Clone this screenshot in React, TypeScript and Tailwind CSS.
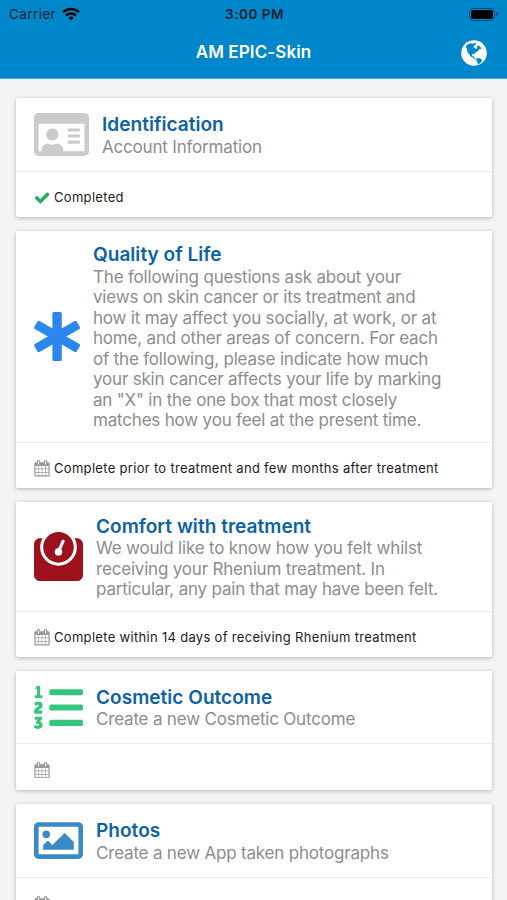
import type { ReactNode } from "react";
import { FaRegIdCard, FaWeight, FaListOl, FaRegImage, FaCheck } from "react-icons/fa";

function Calendar() {
  return (
    <svg viewBox="0 0 1664 1792" className="h-[16.5px] w-4 shrink-0 text-[#999]" fill="currentColor">
      <path d="M128 1664h288v-288H128v288zm352 0h320v-288H480v288zM128 1312h288V992H128v320zm352 0h320V992H480v320zM128 928h288V640H128v288zm736 736h320v-288H864v288zM480 928h320V640H480v288zm768 736h288v-288h-288v288zM864 1312h320V992H864v320zM512 448V160q0-13-9.500-22.500T480 128h-64q-13 0-22.500 9.500T384 160v288q0 13 9.500 22.500T416 480h64q13 0 22.500-9.500T512 448zm736 864h288V992h-288v320zM864 928h320V640H864v288zm384 0h288V640h-288v288zm32-480V160q0-13-9.500-22.500T1248 128h-64q-13 0-22.500 9.500T1152 160v288q0 13 9.500 22.500t22.500 9.500h64q13 0 22.500-9.500T1280 448zm384-64v1280q0 52-38 90t-90 38H128q-52 0-90-38t-38-90V384q0-52 38-90t90-38h128v-96q0-66 47-113T416 0h64q66 0 113 47t47 113v96h384v-96q0-66 47-113t113-47h64q66 0 113 47t47 113v96h128q52 0 90 38t38 90z" />
    </svg>
  );
}

function Asterisk() {
  return (
    <svg viewBox="0 0 46 49" className="h-[49px] w-[46px] shrink-0 overflow-visible text-[#2b87ee]" fill="currentColor">
      <rect x="18.400" y="0" width="9.400" height="49" rx="1.500" />
      <rect x="18.400" y="0" width="9.400" height="49" rx="1.500" transform="rotate(60 23.100 24.500)" />
      <rect x="18.400" y="0" width="9.400" height="49" rx="1.500" transform="rotate(-60 23.100 24.500)" />
    </svg>
  );
}

function Wifi() {
  return (
    <svg viewBox="0 0 18 14" className="h-[14px] w-[18px] text-black" fill="none" stroke="currentColor" strokeWidth="2.500">
      <path d="M1 5.200a11.500 11.500 0 0 1 16 0" />
      <path d="M4 8.500a7.200 7.200 0 0 1 10 0" />
      <path d="M9 13.500 6.300 10.800a4 4 0 0 1 5.400 0z" fill="currentColor" stroke="none" />
    </svg>
  );
}

function Globe() {
  return (
    <svg viewBox="0 0 26 26" className="h-[26px] w-[26px] justify-self-end">
      <circle cx="13" cy="13" r="12.800" fill="#fff" />
      <path
        d="M4.600 6.200 7 4.200l3-1 2 .6 2.500-1 .7 1.400-2 1.300-.8 1.800 1.600.7 1.400 1.200 1-1.700-.6-1.600 1.600-.5 1.800 1.300 1.300 2-2 .3-1.200 1.700-1.800 1.300-1.600.8-.4 1.500-1.500-.6-1.200 1.300.6 1.200 1.500.2.5 1.500 1.700.6-.4.700-2-.7-1.700-1.500-1.800-.8-1.200-2.400-1.700-2.100-.2-2.700-.9-1.300z"
        fill="#0087cb"
      />
      <path d="m15.500 18.600 2-.6 1.900.8 1.800 1.300-.7 1.700-1.400 1.100-1.600 1.400-1 .2.200-2-1.500-1.700z" fill="#0087cb" />
    </svg>
  );
}

type CardProps = {
  icon: ReactNode;
  title: string;
  lines: string[];
  height: string;
  body: string;
  status?: string;
  done?: boolean;
};

function Card({ icon, title, lines, height, body, status, done }: CardProps) {
  return (
    <section className={`flex shrink-0 flex-col rounded-[2px] bg-white shadow-[0_1px_4px_rgba(0,0,0,0.26)] ${height}`}>
      <div className={`flex shrink-0 items-center gap-[13px] border-b border-[#ececec] pl-[18px] ${body}`}>
        {icon}
        <div className="pt-px whitespace-nowrap">
          <h2 className="text-[19px] leading-[23.5px] font-semibold tracking-[0.04px] text-[#0c62a3]">{title}</h2>
          {lines.map((line) => (
            <p key={line} className="text-[17px] leading-[20.5px] tracking-[-0.19px] text-[#8d8d8d]">{line}</p>
          ))}
        </div>
      </div>
      <div className="flex flex-1 items-center gap-1 pt-[6px] pl-[18px] text-[13px] tracking-[0.31px] text-[#1c1c1c]">
        {done ? <FaCheck className="h-4 w-4 p-px text-[#27ae60]" stroke="currentColor" strokeWidth="36" /> : <Calendar />}
        <span className="whitespace-nowrap">{status}</span>
      </div>
    </section>
  );
}

export default function App() {
  return (
    <div className="flex h-[900px] w-[507px] flex-col overflow-hidden bg-[#f4f4f4] font-['Inter',sans-serif]">
      <header className="h-[79px] shrink-0 border-b border-[#45aadd] bg-[#0087cb]">
        <div className="grid h-[28px] grid-cols-3 items-center px-[9px] text-[13.5px] text-[#07212f]">
          <div className="flex items-center gap-[6px]">
            <span className="tracking-[0.4px]">Carrier</span>
            <Wifi />
          </div>
          <span className="pl-[2px] text-center font-semibold tracking-[0.5px]">3:00 PM</span>
          <div className="flex items-center justify-end gap-px">
            <div className="h-[13px] w-[26px] rounded-[4px] border border-[#00517b] p-px">
              <div className="h-full rounded-[2px] bg-black" />
            </div>
            <div className="h-1 w-[2px] rounded-r-full bg-[#00517b]" />
          </div>
        </div>
        <div className="grid h-[50px] grid-cols-[1fr_auto_1fr] items-center px-5">
          <span />
          <h1 className="text-[17px] font-semibold tracking-[0.1px] text-white">AM EPIC-Skin</h1>
          <Globe />
        </div>
      </header>
      <main className="flex flex-1 flex-col gap-[14px] overflow-hidden pt-[19px] pr-[15px] pl-4">
        <Card
          icon={<FaRegIdCard className="h-[49px] w-[55px] shrink-0 text-[#cbcbcb]" />}
          height="h-[119px]" body="h-[74px]"
          title="Identification" lines={["Account Information"]} status="Completed" done
        />
        <Card
          icon={<Asterisk />}
          height="h-[257px]" body="h-[212px]"
          title="Quality of Life"
          lines={[
            "The following questions ask about your",
            "views on skin cancer or its treatment and",
            "how it may affect you socially, at work, or at",
            "home, and other areas of concern. For each",
            "of the following, please indicate how much",
            "your skin cancer affects your life by marking",
            'an "X" in the one box that most closely',
            "matches how you feel at the present time.",
          ]}
          status="Complete prior to treatment and few months after treatment"
        />
        <Card
          icon={<FaWeight className="h-[49px] w-[49px] shrink-0 text-[#9d111c]" />}
          height="h-[155px]" body="h-[110px]"
          title="Comfort with treatment"
          lines={[
            "We would like to know how you felt whilst",
            "receiving your Rhenium treatment. In",
            "particular, any pain that may have been felt.",
          ]}
          status="Complete within 14 days of receiving Rhenium treatment"
        />
        <Card
          icon={<FaListOl className="h-[49px] w-[49px] shrink-0 text-[#35c57c]" />}
          height="h-[119px]" body="h-[73px]"
          title="Cosmetic Outcome" lines={["Create a new Cosmetic Outcome"]}
        />
        <Card
          icon={<FaRegImage className="h-[49px] w-[49px] shrink-0 text-[#398ac6]" />}
          height="h-[120px]" body="h-[74px]"
          title="Photos" lines={["Create a new App taken photographs"]}
        />
      </main>
    </div>
  );
}
